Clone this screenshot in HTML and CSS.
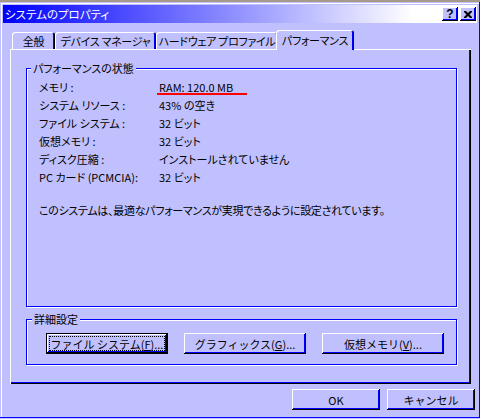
FILE: index.html
```html
<!DOCTYPE html>
<html>
<head>
  <title>システムのプロパティ</title>
  <link rel="stylesheet" href="styles.css">
</head>
<body>
  <div class="desktop"></div>
  <div class="window">
    <div class="titlebar">
      <span class="title">システムのプロパティ</span>
      <div class="caption-buttons">
        <button class="cap-btn help">?</button>
        <button class="cap-btn close">
          <svg width="8" height="7" viewBox="0 0 8 7">
            <path d="M0 0h2l2 2 2-2h2v1l-2.5 2.5 2.5 2.5v1h-2l-2-2-2 2h-2v-1l2.5-2.5-2.5-2.5z" fill="#000"/>
          </svg>
        </button>
      </div>
    </div>

    <div class="tabs">
      <div class="tab tab-general">全般</div>
      <div class="tab tab-devices">デバイス マネージャ</div>
      <div class="tab tab-profiles">ハードウェア プロファイル</div>
      <div class="tab tab-perf active">パフォーマンス</div>
    </div>

    <div class="panel">
      <fieldset class="group status">
        <legend>パフォーマンスの状態</legend>
        <dl class="info">
          <dt>メモリ :</dt><dd><span class="mark">RAM: 120.0 MB</span></dd>
          <dt>システム リソース :</dt><dd>43% の空き</dd>
          <dt>ファイル システム :</dt><dd>32 ビット</dd>
          <dt>仮想メモリ :</dt><dd>32 ビット</dd>
          <dt>ディスク圧縮 :</dt><dd>インストールされていません</dd>
          <dt>PC カード (PCMCIA):</dt><dd>32 ビット</dd>
        </dl>
        <p class="note">このシステムは、最適なパフォーマンスが実現できるように設定されています。</p>
      </fieldset>

      <fieldset class="group advanced">
        <legend>詳細設定</legend>
        <div class="adv-buttons">
          <button class="btn wide default">ファイル システム(<u>F</u>)...</button>
          <button class="btn wide">グラフィックス(<u>G</u>)...</button>
          <button class="btn wide">仮想メモリ(<u>V</u>)...</button>
        </div>
      </fieldset>
    </div>

    <div class="dialog-buttons">
      <button class="btn small">OK</button>
      <button class="btn small">キャンセル</button>
    </div>
  </div>
</body>
</html>
```

FILE: styles.css
```css
body {
  margin: 0;
  background-color: #c0c0ff;
  font-family: "Noto Sans CJK JP", sans-serif;
  font-size: 11px;
  font-feature-settings: "palt";
  color: #000000;
}

.desktop {
  height: 2px;
  background-color: #a89a8a;
}

.window {
  box-sizing: border-box;
  width: 480px;
  height: 416px;
  padding: 3px;
  background-color: #c0c0ff;
  box-shadow: inset -1px -1px #0000ff, inset 1px 1px #c0c0ff, inset 2px 2px #ffffff;
}

/* title bar */
.titlebar {
  height: 18px;
  display: flex;
  align-items: center;
  justify-content: space-between;
  padding: 0 1px 0 2px;
  background: linear-gradient(to right, #0000ff, #ffffff 410px);
}

.title {
  color: #ffffff;
  font-size: 11.5px;
}

.caption-buttons {
  display: flex;
  gap: 2px;
}

.cap-btn {
  width: 16px;
  height: 14px;
  padding: 0;
  border: none;
  background-color: #c0c0ff;
  box-shadow: inset -1px -1px #000000, inset 1px 1px #ffffff, inset -2px -2px #0000ff;
  display: flex;
  align-items: center;
  justify-content: center;
}

.help {
  font-family: "Liberation Sans", sans-serif;
  font-weight: bold;
  font-size: 12px;
  line-height: 1;
  color: #000000;
}

.close svg {
  display: block;
}

/* tabs */
.tabs {
  display: flex;
  align-items: flex-end;
  height: 19px;
  margin: 7px 0 0 9px;
}

.tab {
  box-sizing: border-box;
  height: 17px;
  display: flex;
  align-items: center;
  justify-content: center;
  padding-top: 1px;
  border-radius: 3px 3px 0 0;
  box-shadow: inset 1px 1px #ffffff, inset -1px 0 #000000, inset -2px 0 #0000ff;
  white-space: nowrap;
  letter-spacing: -0.3px;
}

.tab-general { width: 43px; }
.tab-devices { width: 101px; }
.tab-profiles { width: 122px; }
.tab-perf { width: 78px; }

.tab.active {
  height: 20px;
  margin: 0 -2px -1px;
  padding-top: 0;
  position: relative;
  z-index: 1;
  background-color: #c0c0ff;
}

/* page */
.panel {
  box-sizing: border-box;
  height: 335px;
  margin: 0 6px 0 7px;
  padding: 12px 14px 19px 16px;
  display: flex;
  flex-direction: column;
  gap: 5px;
  box-shadow: inset 1px 1px #ffffff, inset -1px -1px #000000, inset -2px -2px #0000ff;
}

.group {
  margin: 0;
  min-width: 0;
  border: 1px solid #0000ff;
  box-shadow: 1px 1px #ffffff, inset 1px 1px #ffffff;
}

.group legend {
  padding: 0 2px;
  line-height: 14px;
  background-color: #c0c0ff;
}

.status {
  flex: 1;
  padding: 3px 12px 0 12px;
}

.status legend {
  margin-left: -8px;
}

.info {
  display: grid;
  grid-template-columns: 120px auto;
  grid-auto-rows: 18px;
  align-items: center;
  margin: 0;
}

.info dt,
.info dd {
  margin: 0;
  line-height: 18px;
  white-space: nowrap;
}

.mark {
  position: relative;
}

.mark::after {
  content: "";
  position: absolute;
  left: -2px;
  right: -14px;
  top: 14px;
  height: 2px;
  background-color: #ff0000;
}

.note {
  margin: 15px 0 0;
  line-height: 18px;
  letter-spacing: -0.3px;
}

.advanced {
  padding: 7px 12px 10px 19px;
}

.advanced legend {
  margin-left: -14px;
}

.adv-buttons {
  display: flex;
  gap: 16px;
}

/* push buttons */
.btn {
  box-sizing: border-box;
  height: 21px;
  padding: 0;
  border: none;
  background-color: #c0c0ff;
  font-family: "Noto Sans CJK JP", sans-serif;
  font-size: 11px;
  color: #000000;
  white-space: nowrap;
  box-shadow: inset -1px -1px #000000, inset 1px 1px #ffffff, inset -2px -2px #0000ff;
}

.btn.wide {
  width: 122px;
}

.btn.small {
  width: 88px;
}

.btn.default {
  box-shadow: inset 0 0 0 1px #000000, inset -2px -2px #000000, inset 2px 2px #ffffff, inset -3px -3px #0000ff;
  outline: 1px dotted #000000;
  outline-offset: -4px;
}

.dialog-buttons {
  display: flex;
  justify-content: flex-end;
  gap: 7px;
  margin-top: 5px;
  padding-right: 2px;
}
```
